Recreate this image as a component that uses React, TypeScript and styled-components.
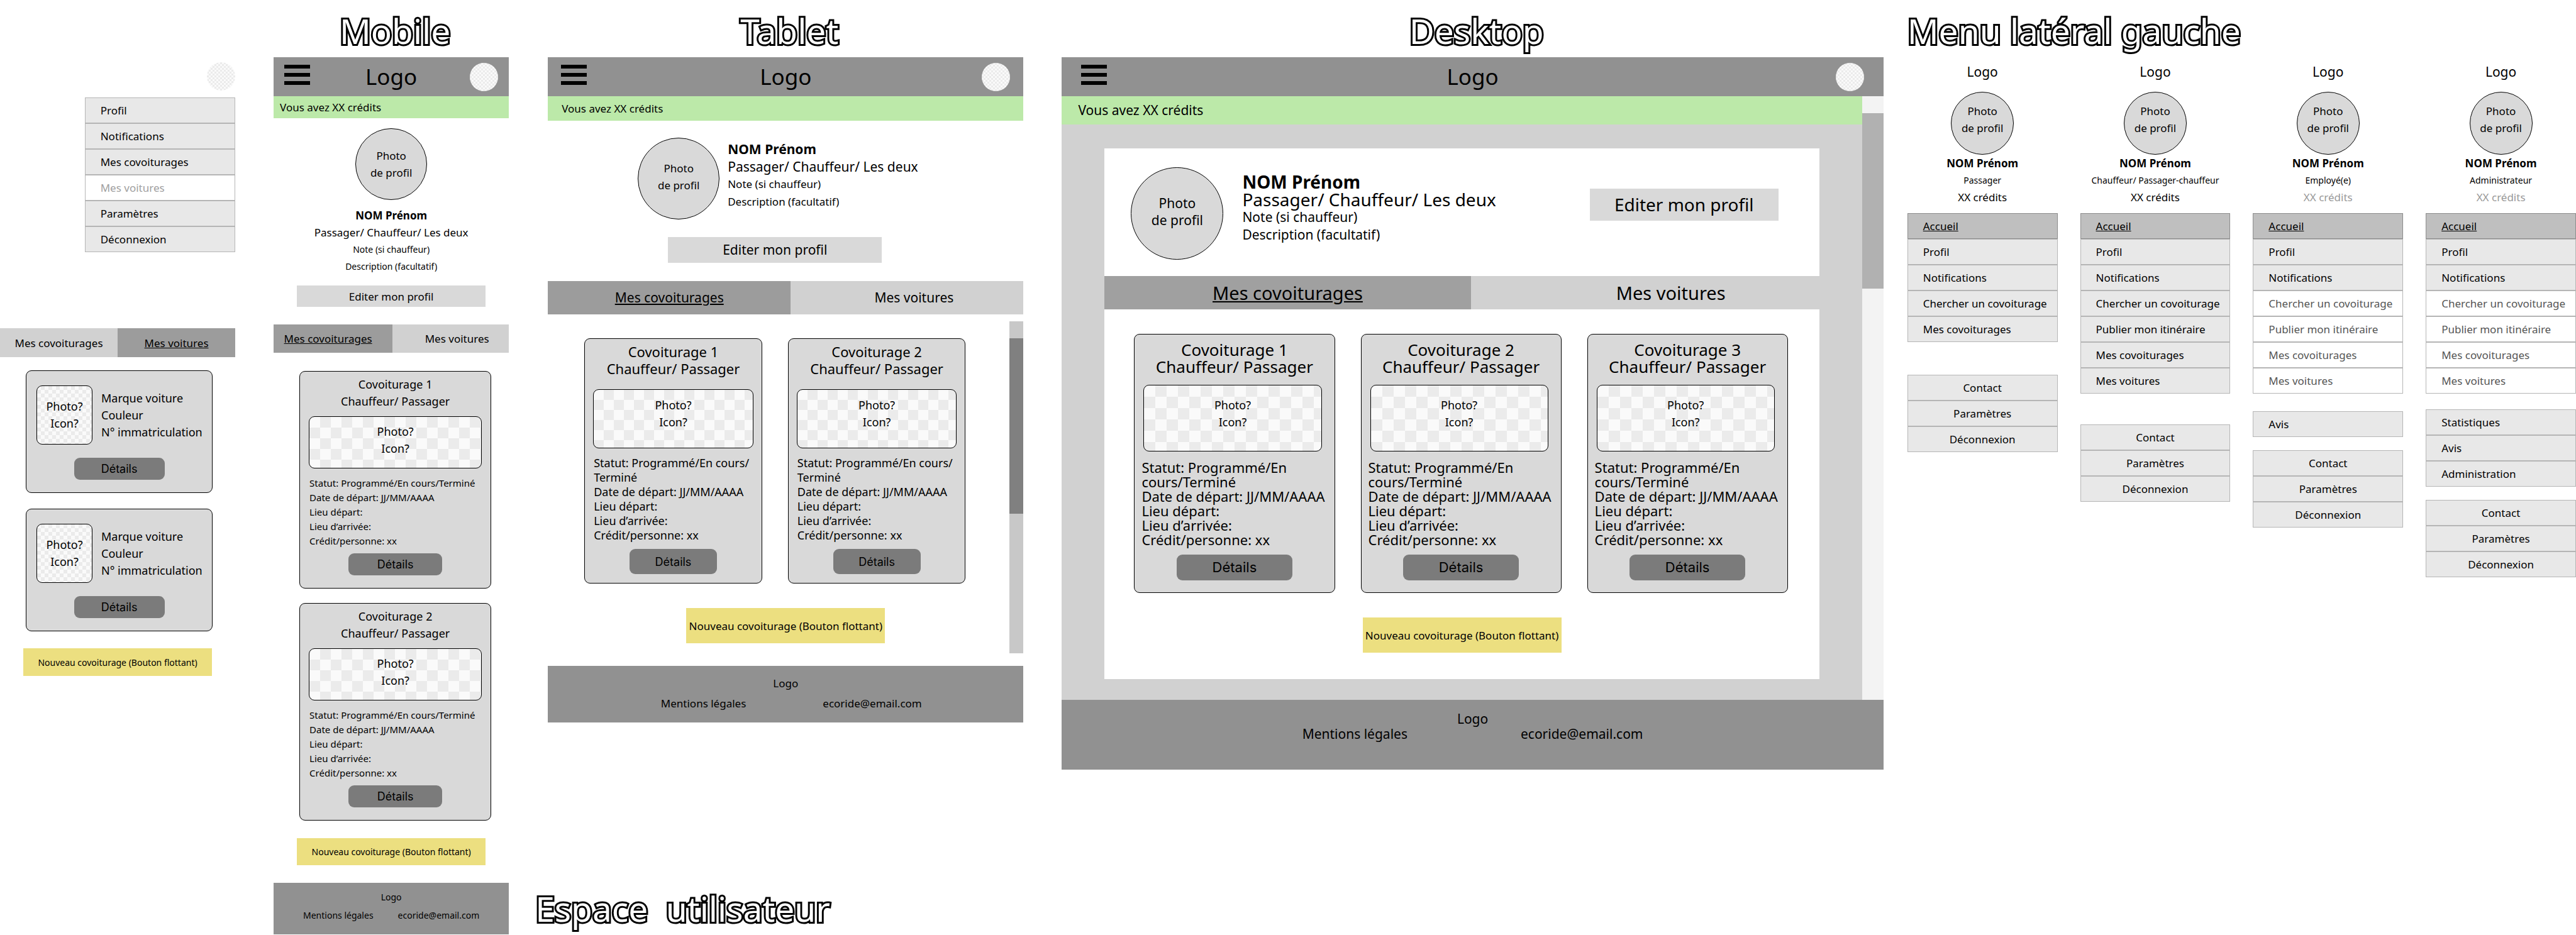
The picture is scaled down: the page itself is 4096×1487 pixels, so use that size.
import React from 'react';
import styled, { createGlobalStyle, css } from 'styled-components';

/* ---------- tokens ---------- */

type Device = 'mobile' | 'tablet' | 'desktop';

interface Spec {
  barPad: number;
  creditsPad: number;
  creditsHeight: number;
  creditsSize: number;
  circle: number;
  circleSize: number;
  nameSize: number;
  noteSize: number;
  edit: { width: number; height: number; size: number };
  tabs: { height: number; size: number; split: [number, number]; insetLeft: number; insetRight: number; active: string };
  card: {
    padTop: number; titleSize: number; imageGap: number; imageHeight: number; imagePad: number; imageLeft: number; imageRight: number;
    cell: number; linesGap: number; linesLeft: number; linesSize: number; buttonGap: number; button: [number, number]; buttonSize: number; padBottom: number;
  };
  cta: { width: number; height: number; size: number };
  footer: { height: number; padTop: number; line: number; size: number; gap: number; inset: number };
}

const specs: Record<Device, Spec> = {
  mobile: {
    barPad: 17, creditsPad: 10, creditsHeight: 35, creditsSize: 17,
    circle: 114, circleSize: 17, nameSize: 17, noteSize: 14,
    edit: { width: 300, height: 34, size: 17 },
    tabs: { height: 45, size: 17, split: [189, 185], insetLeft: 16, insetRight: 20, active: '#9c9c9c' },
    card: {
      padTop: 7, titleSize: 18, imageGap: 10, imageHeight: 83, imagePad: 10, imageLeft: 14, imageRight: 14,
      cell: 17, linesGap: 12, linesLeft: 15, linesSize: 15, buttonGap: 8, button: [149, 35], buttonSize: 18, padBottom: 20,
    },
    cta: { width: 300, height: 43, size: 14 },
    footer: { height: 82, padTop: 8, line: 29, size: 14, gap: 39, inset: 0 },
  },
  tablet: {
    barPad: 21, creditsPad: 22, creditsHeight: 39, creditsSize: 17,
    circle: 130, circleSize: 17, nameSize: 21, noteSize: 17,
    edit: { width: 340, height: 41, size: 21 },
    tabs: { height: 53, size: 21, split: [386, 370], insetLeft: 0, insetRight: 22, active: '#9c9c9c' },
    card: {
      padTop: 7, titleSize: 22, imageGap: 19, imageHeight: 94, imagePad: 11, imageLeft: 13, imageRight: 13,
      cell: 16, linesGap: 12, linesLeft: 14, linesSize: 18, buttonGap: 10, button: [139, 40], buttonSize: 18, padBottom: 14,
    },
    cta: { width: 316, height: 56, size: 17 },
    footer: { height: 90, padTop: 12, line: 32, size: 17, gap: 122, inset: 18 },
  },
  desktop: {
    barPad: 31, creditsPad: 26, creditsHeight: 45, creditsSize: 21,
    circle: 147, circleSize: 21, nameSize: 28, noteSize: 21,
    edit: { width: 300, height: 51, size: 28 },
    tabs: { height: 53, size: 29, split: [582, 554], insetLeft: 0, insetRight: 82, active: '#a0a0a0' },
    card: {
      padTop: 11, titleSize: 26, imageGap: 15, imageHeight: 106, imagePad: 18, imageLeft: 14, imageRight: 20,
      cell: 18, linesGap: 14, linesLeft: 11, linesSize: 22, buttonGap: 12, button: [184, 41], buttonSize: 22, padBottom: 19,
    },
    cta: { width: 316, height: 56, size: 17 },
    footer: { height: 111, padTop: 18, line: 24, size: 21, gap: 180, inset: 0 },
  },
};

const GlobalStyle = createGlobalStyle`
  *, *::before, *::after { box-sizing: border-box; }
  body { margin: 0; background: #fff; color: #000; font-family: "Noto Sans", "Open Sans", sans-serif; font-size: 17px; line-height: 27px; }
  button { font: inherit; color: inherit; border: 0; padding: 0; margin: 0; cursor: pointer; }
  a { color: inherit; text-decoration: none; }
  h1, h2, h3, p, ul { margin: 0; padding: 0; font-weight: 400; font-size: inherit; }
  ul { list-style: none; }
`;

const checker = (cell: number) => css`
  background: repeating-conic-gradient(#ebebeb 0 25%, #fafafa 0 50%) 0 0 / ${cell * 2}px ${cell * 2}px;
`;

/* ---------- page ---------- */

const Page = styled.main`
  display: flex;
  min-height: 100vh;
  overflow: hidden;
`;

const Column = styled.section<{ $grow: number; $gap?: number }>`
  flex: ${(p) => p.$grow} 1 0;
  min-width: 0;
  margin-left: ${(p) => p.$gap ?? 0}px;
  display: flex;
  flex-direction: column;
`;

const Frames = styled.div`
  display: flex;
  align-items: flex-start;
  padding-left: 20px;
`;

const Title = styled.h2<{ $left?: boolean }>`
  height: 91px;
  padding: ${(p) => (p.$left ? '6px 0 0' : '6px 0 0 12px')};
  text-align: ${(p) => (p.$left ? 'left' : 'center')};
  font-size: 55px;
  line-height: 85px;
  white-space: pre;
  color: #fff;
  -webkit-text-stroke: 6px #000;
  paint-order: stroke fill;
`;

const PageTitle = styled(Title).attrs({ as: 'h1' })`
  margin-top: auto;
  height: 85px;
  padding: 0;
`;

/* ---------- shared parts ---------- */

const TopBar = styled.header<{ $pad: number }>`
  display: grid;
  grid-template-columns: 1fr auto 1fr;
  align-items: center;
  height: 62px;
  padding: 0 ${(p) => p.$pad}px;
  background: #919191;
  font-size: 35px;
  line-height: 48px;
`;

const Burger = styled.button`
  align-self: start;
  margin-top: 12px;
  width: 41px;
  height: 32px;
  display: flex;
  flex-direction: column;
  justify-content: space-between;
  background: none;
`;

const Bar = styled.span`
  height: 6px;
  background: #000;
`;

const Avatar = styled.button`
  justify-self: end;
  width: 45px;
  height: 45px;
  border-radius: 50%;
  ${checker(3)}
`;

const Credits = styled.p<{ $s: Spec }>`
  height: ${(p) => p.$s.creditsHeight}px;
  line-height: ${(p) => p.$s.creditsHeight}px;
  padding-left: ${(p) => p.$s.creditsPad}px;
  font-size: ${(p) => p.$s.creditsSize}px;
  background: #bce9a9;
`;

const Circle = styled.div<{ $size: number; $font: number; $lift?: number }>`
  flex: none;
  width: ${(p) => p.$size}px;
  height: ${(p) => p.$size}px;
  padding-bottom: ${(p) => p.$lift ?? 0}px;
  border: 1px solid #000;
  border-radius: 50%;
  background: #d9d9d9;
  display: flex;
  flex-direction: column;
  align-items: center;
  justify-content: center;
  font-size: ${(p) => p.$font}px;
  line-height: 27px;
`;

const Identity = styled.div<{ $s: Spec; $line: number; $top: number }>`
  padding-top: ${(p) => p.$top}px;
  font-size: ${(p) => p.$s.nameSize}px;
  line-height: ${(p) => p.$line}px;
  white-space: nowrap;
`;

const Name = styled.h3`
  font-weight: 700;
`;

const Note = styled.p<{ $size: number }>`
  font-size: ${(p) => p.$size}px;
`;

const EditButton = styled.button<{ $s: Spec }>`
  width: ${(p) => p.$s.edit.width}px;
  height: ${(p) => p.$s.edit.height}px;
  font-size: ${(p) => p.$s.edit.size}px;
  background: #d9d9d9;
`;

const TabRow = styled.div<{ $s: Spec; $height?: number; $split?: [number, number] }>`
  display: grid;
  grid-template-columns: ${(p) => (p.$split ?? p.$s.tabs.split).map((n) => `${n}fr`).join(' ')};
  height: ${(p) => p.$height ?? p.$s.tabs.height}px;
  font-size: ${(p) => p.$s.tabs.size}px;
`;

const Tab = styled.button<{ $active?: string; $pl?: number; $pr?: number }>`
  padding-left: ${(p) => p.$pl ?? 0}px;
  padding-right: ${(p) => p.$pr ?? 0}px;
  background: ${(p) => p.$active ?? '#d1d1d1'};
  text-decoration: ${(p) => (p.$active ? 'underline' : 'none')};
  white-space: nowrap;
`;

const Card = styled.article<{ $s: Spec }>`
  flex: 1 1 0;
  min-width: 0;
  display: flex;
  flex-direction: column;
  padding: ${(p) => p.$s.card.padTop}px 0 ${(p) => p.$s.card.padBottom}px;
  border: 1px solid #000;
  border-radius: 9px;
  background: #d9d9d9;
`;

const CardTitle = styled.h3<{ $s: Spec }>`
  text-align: center;
  font-size: ${(p) => p.$s.card.titleSize}px;
  line-height: 27px;
  white-space: nowrap;
`;

const CardImage = styled.div<{ $s: Spec }>`
  height: ${(p) => p.$s.card.imageHeight}px;
  margin: ${(p) => p.$s.card.imageGap}px ${(p) => p.$s.card.imageRight}px 0 ${(p) => p.$s.card.imageLeft}px;
  padding-top: ${(p) => p.$s.card.imagePad}px;
  border: 1px solid #000;
  border-radius: 9px;
  text-align: center;
  font-size: 18px;
  line-height: 27px;
  ${(p) => checker(p.$s.card.cell)}
`;

const CardLines = styled.div<{ $s: Spec }>`
  margin: ${(p) => p.$s.card.linesGap}px 0 0 ${(p) => p.$s.card.linesLeft}px;
  font-size: ${(p) => p.$s.card.linesSize}px;
  line-height: 23px;
  white-space: nowrap;
`;

const DetailsButton = styled.button<{ $w: number; $h: number; $size: number; $gap: number }>`
  align-self: center;
  width: ${(p) => p.$w}px;
  height: ${(p) => p.$h}px;
  margin-top: ${(p) => p.$gap}px;
  border-radius: 9px;
  background: #7b7b7b;
  font-family: Inter, "Noto Sans", sans-serif;
  font-size: ${(p) => p.$size}px;
`;

const NewRide = styled.button<{ $s: Spec; $height?: number }>`
  align-self: center;
  width: ${(p) => p.$s.cta.width}px;
  height: ${(p) => p.$height ?? p.$s.cta.height}px;
  font-size: ${(p) => p.$s.cta.size}px;
  background: #ecdf80;
  white-space: nowrap;
`;

const Footer = styled.footer<{ $s: Spec }>`
  height: ${(p) => p.$s.footer.height}px;
  padding-top: ${(p) => p.$s.footer.padTop}px;
  background: #919191;
  text-align: center;
  font-size: ${(p) => p.$s.footer.size}px;
  line-height: ${(p) => p.$s.footer.line}px;
`;

const FooterLinks = styled.div<{ $s: Spec }>`
  display: flex;
  justify-content: center;
  gap: ${(p) => p.$s.footer.gap}px;
  padding-left: ${(p) => p.$s.footer.inset}px;
`;

function Header({ s }: { s: Spec }) {
  return (
    <TopBar $pad={s.barPad}>
      <Burger type="button" aria-label="Menu"><Bar /><Bar /><Bar /></Burger>
      <span>Logo</span>
      <Avatar type="button" aria-label="Compte" />
    </TopBar>
  );
}

function Photo({ size, font, lift }: { size: number; font: number; lift?: number }) {
  return (
    <Circle $size={size} $font={font} $lift={lift}>
      <span>Photo</span>
      <span>de profil</span>
    </Circle>
  );
}

function Who({ s, line, top }: { s: Spec; line: number; top: number }) {
  return (
    <Identity $s={s} $line={line} $top={top}>
      <Name>NOM Prénom</Name>
      <p>Passager/ Chauffeur/ Les deux</p>
      <Note $size={s.noteSize}>Note (si chauffeur)</Note>
      <Note $size={s.noteSize}>Description (facultatif)</Note>
    </Identity>
  );
}

function Tabs({ s }: { s: Spec }) {
  return (
    <TabRow $s={s} role="tablist">
      <Tab type="button" role="tab" aria-selected $active={s.tabs.active} $pr={s.tabs.insetLeft}>Mes covoiturages</Tab>
      <Tab type="button" role="tab" aria-selected={false} $pl={s.tabs.insetRight}>Mes voitures</Tab>
    </TabRow>
  );
}

const statusLines: Record<Device, string[]> = {
  mobile: ['Statut: Programmé/En cours/Terminé'],
  tablet: ['Statut: Programmé/En cours/', 'Terminé'],
  desktop: ['Statut: Programmé/En', 'cours/Terminé'],
};

function RideCard({ device, n }: { device: Device; n: number }) {
  const s = specs[device];
  const lines = [...statusLines[device], 'Date de départ: JJ/MM/AAAA', 'Lieu départ:', 'Lieu d’arrivée:', 'Crédit/personne: xx'];
  return (
    <Card $s={s}>
      <CardTitle $s={s}>Covoiturage {n}<br />Chauffeur/ Passager</CardTitle>
      <CardImage $s={s}>Photo?<br />Icon?</CardImage>
      <CardLines $s={s}>{lines.map((l) => <p key={l}>{l}</p>)}</CardLines>
      <DetailsButton type="button" $w={s.card.button[0]} $h={s.card.button[1]} $size={s.card.buttonSize} $gap={s.card.buttonGap}>Détails</DetailsButton>
    </Card>
  );
}

function SiteFooter({ s }: { s: Spec }) {
  return (
    <Footer $s={s}>
      <p>Logo</p>
      <FooterLinks $s={s}>
        <a href="#mentions">Mentions légales</a>
        <a href="mailto:ecoride@email.com">ecoride@email.com</a>
      </FooterLinks>
    </Footer>
  );
}

const NEW_RIDE = 'Nouveau covoiturage (Bouton flottant)';

/* ---------- menus ---------- */

const List = styled.ul<{ $gap: number }>`
  margin-top: ${(p) => p.$gap}px;
`;

const Item = styled.a<{ $tone: Tone; $center?: boolean; $faint?: boolean }>`
  display: block;
  height: 41px;
  padding-left: ${(p) => (p.$center ? 0 : 24)}px;
  text-align: ${(p) => (p.$center ? 'center' : 'left')};
  line-height: 39px;
  white-space: nowrap;
  border: 1px solid #b5b5b5;
  background: #e8e8e8;
  ${(p) => p.$tone === 'current' && css`
    border-color: #8c8c8c;
    background: #bfbfbf;
    text-decoration: underline;
  `}
  ${(p) => p.$tone === 'off' && css`
    background: #fff;
    color: ${p.$faint ? '#a0a0a0' : '#555'};
  `}
`;

type Tone = 'on' | 'off' | 'current';

function MenuList({ items, off = [], gap, center, faint }: { items: string[]; off?: string[]; gap: number; center?: boolean; faint?: boolean }) {
  return (
    <List $gap={gap}>
      {items.map((label) => (
        <li key={label}>
          <Item href="#menu" $center={center} $faint={faint} $tone={label === 'Accueil' ? 'current' : off.includes(label) ? 'off' : 'on'}>{label}</Item>
        </li>
      ))}
    </List>
  );
}

const Menus = styled.div`
  display: grid;
  grid-template-columns: repeat(4, minmax(0, 1fr));
  gap: 36px;
`;

const Menu = styled.nav`
  padding-top: 9px;
`;

const MenuHead = styled.div`
  display: flex;
  flex-direction: column;
  align-items: center;
  white-space: nowrap;
`;

const MenuLogo = styled.p`
  margin-bottom: 18px;
  font-size: 21px;
  line-height: 28px;
`;

const MenuCredits = styled.p<{ $off?: boolean }>`
  color: ${(p) => (p.$off ? '#999' : '#000')};
`;

const account = ['Contact', 'Paramètres', 'Déconnexion'];
const passenger = ['Accueil', 'Profil', 'Notifications', 'Chercher un covoiturage', 'Mes covoiturages'];
const driver = ['Accueil', 'Profil', 'Notifications', 'Chercher un covoiturage', 'Publier mon itinéraire', 'Mes covoiturages', 'Mes voitures'];
const driverOnly = driver.slice(3);

const menus = [
  { role: 'Passager', items: passenger, off: [] as string[], extra: [] as string[], extraGap: 0, accountGap: 52 },
  { role: 'Chauffeur/ Passager-chauffeur', items: driver, off: [] as string[], extra: [] as string[], extraGap: 0, accountGap: 49 },
  { role: 'Employé(e)', items: driver, off: driverOnly, extra: ['Avis'], extraGap: 28, accountGap: 21 },
  { role: 'Administrateur', items: driver, off: driverOnly, extra: ['Statistiques', 'Avis', 'Administration'], extraGap: 25, accountGap: 21 },
];

/* ---------- left column ---------- */

const Popup = styled.div`
  align-self: flex-end;
  width: 64%;
  margin: 99px 0 121px;
  display: flex;
  flex-direction: column;
  & > ${Avatar} { align-self: flex-end; }
`;

const Cars = styled.div`
  display: flex;
  flex-direction: column;
  gap: 25px;
  padding: 21px 36px 27px 41px;
`;

const CarCard = styled.article`
  display: flex;
  flex-direction: column;
  padding: 23px 0 20px 16px;
  border: 1px solid #000;
  border-radius: 9px;
  background: #d9d9d9;
  font-size: 18px;
`;

const CarRow = styled.div`
  display: flex;
  align-items: center;
  gap: 14px;
  white-space: nowrap;
`;

const CarPhoto = styled.div`
  flex: none;
  width: 89px;
  height: 94px;
  padding-top: 19px;
  border: 1px solid #000;
  border-radius: 9px;
  text-align: center;
  ${checker(6)}
`;

const CarFoot = styled.div`
  display: flex;
  justify-content: center;
  padding-right: 16px;
`;

/* ---------- frame layouts ---------- */

const MobileProfile = styled.div`
  display: flex;
  flex-direction: column;
  align-items: center;
  padding: 16px 0 28px;
  text-align: center;
  & > ${EditButton} { margin-top: 17px; }
`;

const MobileCards = styled.div`
  display: flex;
  flex-direction: column;
  gap: 23px;
  padding: 29px 28px 28px 41px;
`;

const MobileFoot = styled.div`
  margin-top: 28px;
`;

const TabletProfile = styled.div`
  display: flex;
  flex-direction: column;
  align-items: center;
  padding: 27px 34px 29px 0;
  & > ${EditButton} { margin-top: 28px; }
`;

const TabletWho = styled.div`
  align-self: flex-start;
  display: flex;
  gap: 13px;
  padding-left: 143px;
`;

const TabletScroll = styled.div`
  display: flex;
  margin: 11px 0 20px;
`;

const TabletContent = styled.div`
  flex: 1;
  display: flex;
  flex-direction: column;
  padding: 27px 0 16px;
`;

const TabletCards = styled.div`
  display: flex;
  gap: 41px;
  padding: 0 70px 0 58px;
`;

const TabletCta = styled.div`
  display: flex;
  justify-content: center;
  padding: 39px 0 0 22px;
`;

const Track = styled.div<{ $w: number; $bg: string; $top: number }>`
  flex: none;
  width: ${(p) => p.$w}px;
  padding-top: ${(p) => p.$top}px;
  background: ${(p) => p.$bg};
`;

const Thumb = styled.div<{ $h: number; $bg: string }>`
  height: ${(p) => p.$h}px;
  background: ${(p) => p.$bg};
`;

const DesktopScroll = styled.div`
  display: flex;
`;

const DesktopMain = styled.div`
  flex: 1;
  min-width: 0;
`;

const DesktopBody = styled.div`
  padding: 38px 68px 33px;
  background: #d1d1d1;
`;

const Panel = styled.div`
  background: #fff;
`;

const DesktopProfile = styled.div`
  display: flex;
  align-items: flex-start;
  gap: 30px;
  padding: 30px 65px 26px 42px;
  & > ${EditButton} { margin: 34px 0 0 auto; }
`;

const DesktopCards = styled.div`
  display: flex;
  gap: 41px;
  padding: 39px 50px 39px 47px;
`;

const DesktopCta = styled.div`
  display: flex;
  justify-content: center;
  padding-bottom: 42px;
`;

export default function App() {
  const { mobile, tablet, desktop } = specs;
  return (
    <>
      <GlobalStyle />
      <Page>
        <Column $grow={374}>
          <Popup>
            <Avatar type="button" aria-label="Compte" />
            <MenuList
              gap={11}
              faint
              items={['Profil', 'Notifications', 'Mes covoiturages', 'Mes voitures', 'Paramètres', 'Déconnexion']}
              off={['Mes voitures']}
            />
          </Popup>
          <TabRow $s={mobile} $height={46} $split={[1, 1]} role="tablist">
            <Tab type="button" role="tab" aria-selected={false}>Mes covoiturages</Tab>
            <Tab type="button" role="tab" aria-selected $active="#9c9c9c">Mes voitures</Tab>
          </TabRow>
          <Cars>
            {[1, 2].map((n) => (
              <CarCard key={n}>
                <CarRow>
                  <CarPhoto>Photo?<br />Icon?</CarPhoto>
                  <div>
                    <p>Marque voiture</p>
                    <p>Couleur</p>
                    <p>N° immatriculation</p>
                  </div>
                </CarRow>
                <CarFoot>
                  <DetailsButton type="button" $w={144} $h={35} $size={18} $gap={21}>Détails</DetailsButton>
                </CarFoot>
              </CarCard>
            ))}
          </Cars>
          <NewRide type="button" $s={mobile} $height={44}>{NEW_RIDE}</NewRide>
        </Column>

        <Column $grow={374} $gap={61}>
          <Title>Mobile</Title>
          <Header s={mobile} />
          <Credits $s={mobile}>Vous avez XX crédits</Credits>
          <MobileProfile>
            <Photo size={mobile.circle} font={mobile.circleSize} />
            <Who s={mobile} line={27} top={11} />
            <EditButton type="button" $s={mobile}>Editer mon profil</EditButton>
          </MobileProfile>
          <Tabs s={mobile} />
          <MobileCards>
            <RideCard device="mobile" n={1} />
            <RideCard device="mobile" n={2} />
          </MobileCards>
          <NewRide type="button" $s={mobile}>{NEW_RIDE}</NewRide>
          <MobileFoot><SiteFooter s={mobile} /></MobileFoot>
        </Column>

        <Column $grow={2143} $gap={42}>
          <Frames>
            <Column $grow={756}>
              <Title>Tablet</Title>
              <Header s={tablet} />
              <Credits $s={tablet}>Vous avez XX crédits</Credits>
              <TabletProfile>
                <TabletWho>
                  <Photo size={tablet.circle} font={tablet.circleSize} lift={6} />
                  <Who s={tablet} line={28} top={4} />
                </TabletWho>
                <EditButton type="button" $s={tablet}>Editer mon profil</EditButton>
              </TabletProfile>
              <Tabs s={tablet} />
              <TabletScroll>
                <TabletContent>
                  <TabletCards>
                    <RideCard device="tablet" n={1} />
                    <RideCard device="tablet" n={2} />
                  </TabletCards>
                  <TabletCta><NewRide type="button" $s={tablet}>{NEW_RIDE}</NewRide></TabletCta>
                </TabletContent>
                <Track $w={22} $bg="#c8c8c8" $top={27}><Thumb $h={279} $bg="#808080" /></Track>
              </TabletScroll>
              <SiteFooter s={tablet} />
            </Column>

            <Column $grow={1306} $gap={61}>
              <Title>Desktop</Title>
              <Header s={desktop} />
              <DesktopScroll>
                <DesktopMain>
                  <Credits $s={desktop}>Vous avez XX crédits</Credits>
                  <DesktopBody>
                    <Panel>
                      <DesktopProfile>
                        <Photo size={desktop.circle} font={desktop.circleSize} lift={6} />
                        <Who s={desktop} line={28} top={9} />
                        <EditButton type="button" $s={desktop}>Editer mon profil</EditButton>
                      </DesktopProfile>
                      <Tabs s={desktop} />
                      <DesktopCards>
                        <RideCard device="desktop" n={1} />
                        <RideCard device="desktop" n={2} />
                        <RideCard device="desktop" n={3} />
                      </DesktopCards>
                      <DesktopCta><NewRide type="button" $s={desktop}>{NEW_RIDE}</NewRide></DesktopCta>
                    </Panel>
                  </DesktopBody>
                </DesktopMain>
                <Track $w={34} $bg="#f3f3f3" $top={27}><Thumb $h={279} $bg="#b1b1b1" /></Track>
              </DesktopScroll>
              <SiteFooter s={desktop} />
            </Column>
          </Frames>
          <PageTitle $left>Espace  utilisateur</PageTitle>
        </Column>

        <Column $grow={1063} $gap={38}>
          <Title $left>Menu latéral gauche</Title>
          <Menus>
            {menus.map((m) => (
              <Menu key={m.role} aria-label={m.role}>
                <MenuHead>
                  <MenuLogo>Logo</MenuLogo>
                  <Photo size={100} font={17} lift={12} />
                  <Name>NOM Prénom</Name>
                  <Note $size={14}>{m.role}</Note>
                  <MenuCredits $off={m.off.length > 0}>XX crédits</MenuCredits>
                </MenuHead>
                <MenuList gap={12} items={m.items} off={m.off} />
                {m.extra.length > 0 && <MenuList gap={m.extraGap} items={m.extra} />}
                <MenuList gap={m.accountGap} items={account} center />
              </Menu>
            ))}
          </Menus>
        </Column>
      </Page>
    </>
  );
}
